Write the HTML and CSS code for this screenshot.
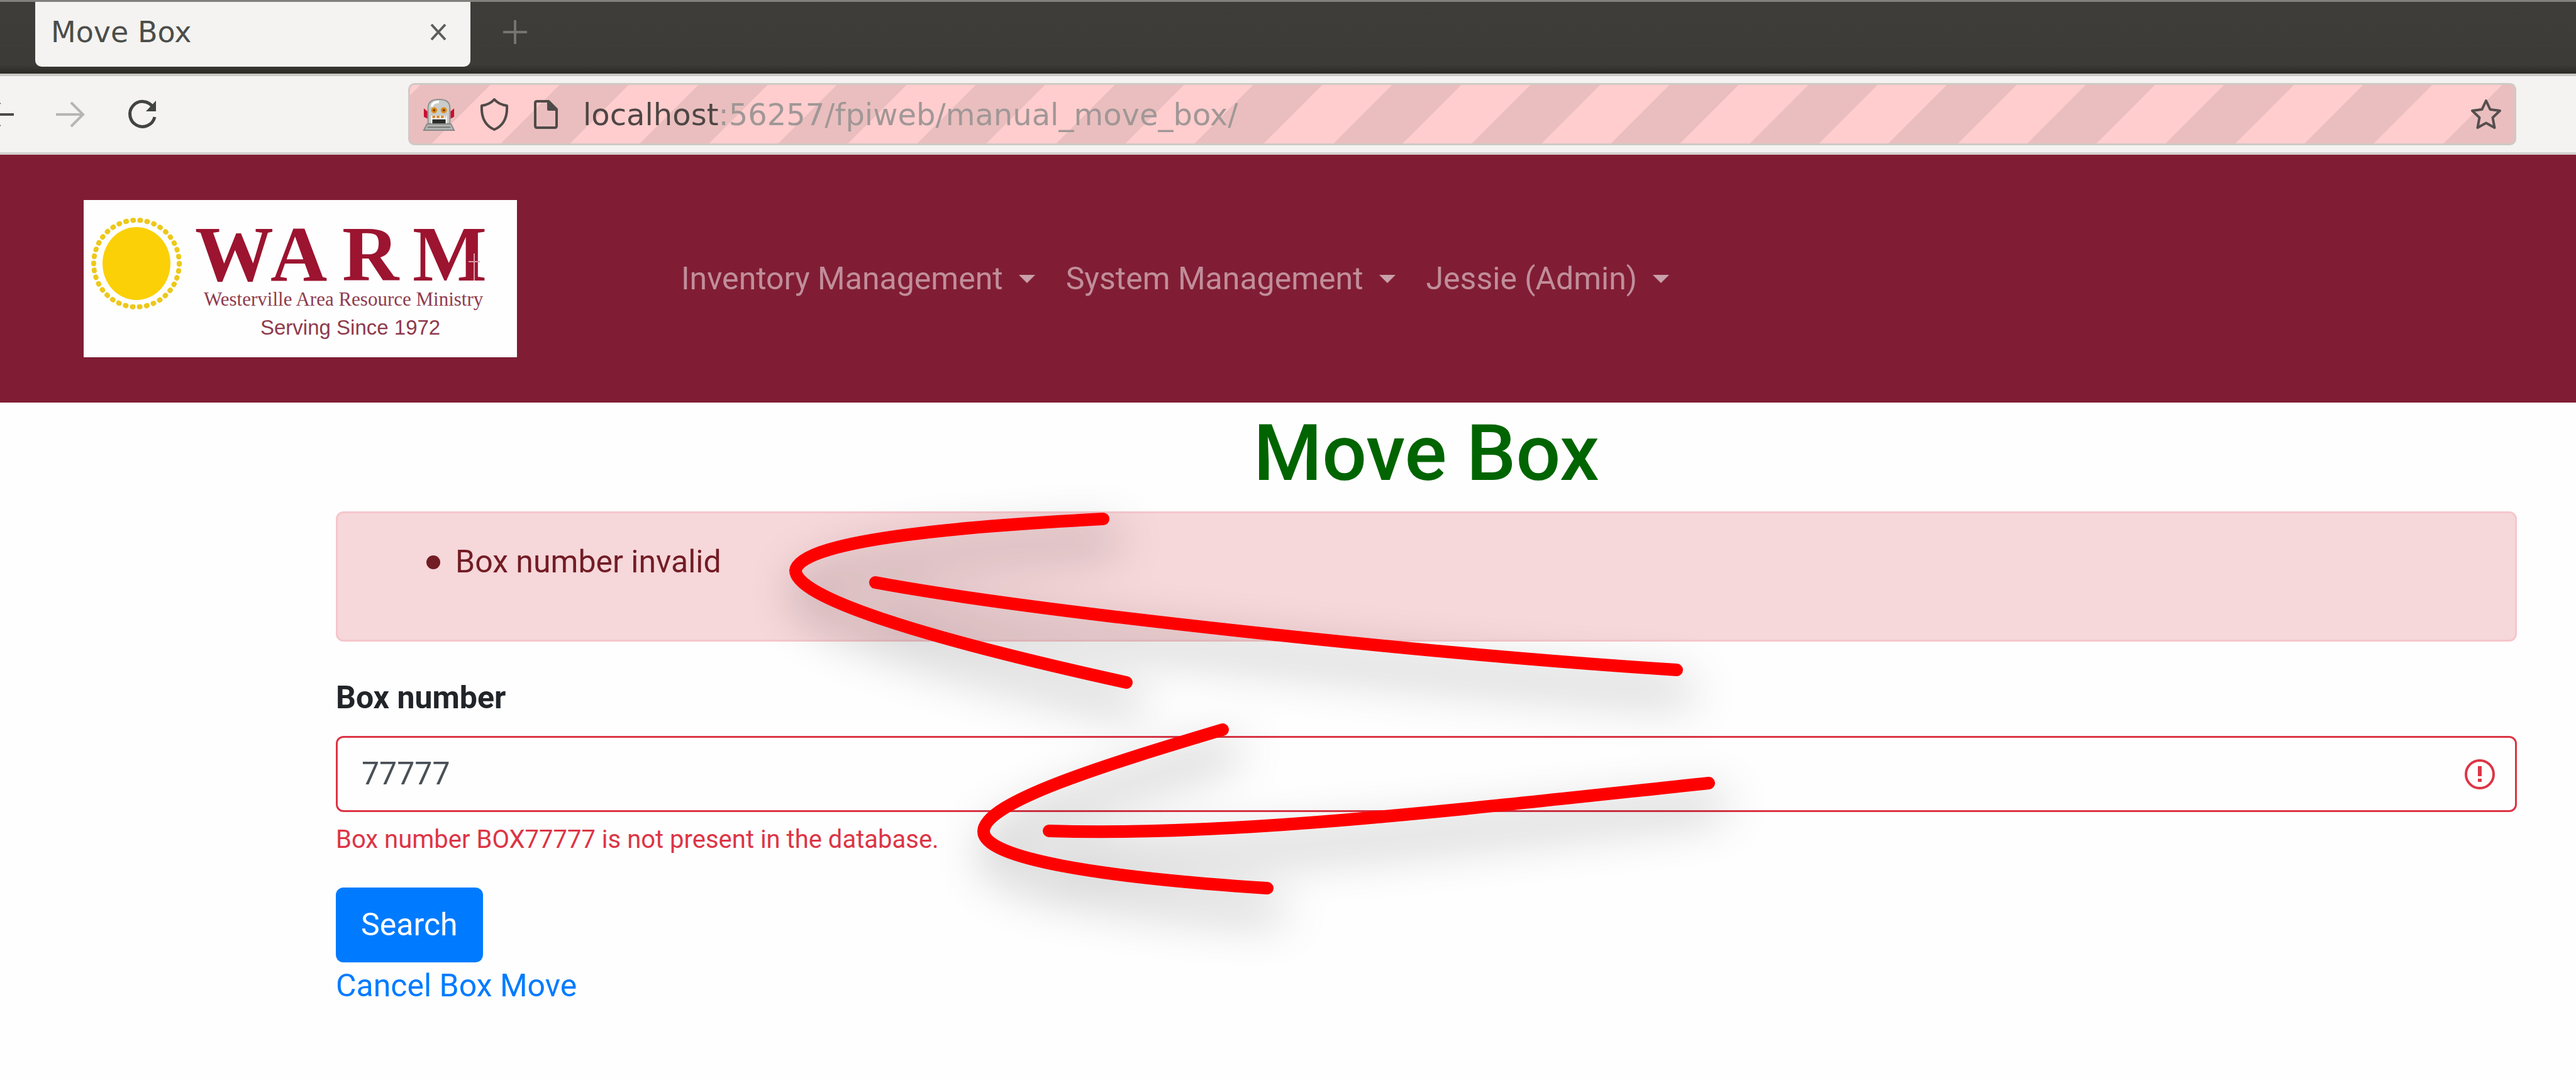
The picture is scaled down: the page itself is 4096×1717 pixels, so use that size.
FILE: index.html
```html
<!DOCTYPE html>
<html lang="en">
<head>
<meta charset="utf-8">
<meta name="viewport" content="width=device-width, initial-scale=1">
<title>Move Box</title>
<link rel="stylesheet" href="styles.css">
</head>
<body>
<div class="browser">
  <div class="tab-strip">
    <div class="tab">
      <span class="tab-title">Move Box</span>
      <button class="icon-button" type="button" aria-label="Close tab">
        <svg width="26" height="28" viewBox="0 0 26 28" fill="none" stroke="#5c5e5b" stroke-width="4"><path d="M2 2L24 26M24 2L2 26"/></svg>
      </button>
    </div>
    <button class="icon-button" type="button" aria-label="New tab">
      <svg width="38" height="38" viewBox="0 0 38 38" fill="none" stroke="#74756f" stroke-width="4"><path d="M19 0V38M0 19H38"/></svg>
    </button>
  </div>
  <div class="toolbar">
    <div class="history">
      <button class="icon-button" type="button" aria-label="Back">
        <svg width="22" height="50" viewBox="0 0 22 50" fill="none" stroke="#4a4c49" stroke-width="4"><path d="M22 25H-20M0 6L-20 25L0 44"/></svg>
      </button>
      <button class="icon-button" type="button" aria-label="Forward">
        <svg width="46" height="50" viewBox="0 0 46 50" fill="none" stroke="#b5b6b3" stroke-width="4"><path d="M0 25H43M24 6L43 25L24 44"/></svg>
      </button>
      <button class="icon-button" type="button" aria-label="Reload">
        <svg width="48" height="50" viewBox="0 0 48 50" fill="none" stroke="#424441" stroke-width="5"><path d="M41 13A20 20 0 1 0 44 29"/><path d="M46 3V20H30Z" fill="#424441" stroke="none"/></svg>
      </button>
    </div>
    <div class="url-bar">
      <svg class="robot" width="52" height="54" viewBox="0 0 54 54">
        <path d="M2 17L8 22V34L2 31ZM52 17L46 22V34L52 31Z" fill="#c8102e"/>
        <path d="M9 42V16Q9 2 27 2T45 16V42Z" fill="#c9ccca" stroke="#8f918f" stroke-width="2"/>
        <path d="M15 14Q17 6 27 6" fill="none" stroke="#fff" stroke-width="4"/>
        <ellipse cx="19" cy="20" rx="5" ry="5" fill="#e08a1a"/><ellipse cx="35" cy="20" rx="5" ry="5" fill="#e08a1a"/>
        <circle cx="19" cy="20" r="2" fill="#7a4300"/><circle cx="35" cy="20" r="2" fill="#7a4300"/>
        <path d="M14 29H40V42H14Z" fill="#fff"/><path d="M16 31H38" stroke="#d88a34" stroke-width="4" stroke-dasharray="5 2"/>
        <path d="M16 35H38V42H16Z" fill="#2b2b2b"/>
        <path d="M7 43H47L52 53H2Z" fill="#b4b6b4" stroke="#858785" stroke-width="2"/><path d="M8 48H46" stroke="#747674" stroke-width="2"/>
      </svg>
      <svg width="46" height="54" viewBox="0 0 46 54" fill="none" stroke="#4f4a49" stroke-width="4" stroke-linejoin="round"><path d="M23 3C28 9 36 12 43 13C44 32 37 45 23 51C9 45 2 32 3 13C10 12 18 9 23 3Z"/></svg>
      <svg width="40" height="48" viewBox="0 0 40 48" fill="none" stroke="#4f4a49" stroke-width="4" stroke-linejoin="round"><path d="M6 3H24L37 16V42Q37 45 34 45H6Q3 45 3 42V6Q3 3 6 3Z"/><path d="M24 3V16H37Z" fill="#4f4a49"/></svg>
      <input class="url" type="text" aria-label="Address" value="localhost:56257/fpiweb/manual_move_box/">
      <button class="icon-button" type="button" aria-label="Bookmark this page">
        <svg width="50" height="50" viewBox="0 0 50 50" fill="none" stroke="#554e4e" stroke-width="4" stroke-linejoin="round"><path d="M25 3L31.500 17L47 19L35.500 30L38.500 46L25 38.500L11.500 46L14.500 30L3 19L18.500 17Z"/></svg>
      </button>
    </div>
  </div>
</div>

<header class="navbar">
  <a class="brand" href="#">
    <svg class="brand-logo" width="689" height="250" viewBox="0 0 689 250" role="img" aria-label="WARM">
      <rect width="689" height="250" fill="#fefefe"/>
      <ellipse cx="84" cy="101" rx="54" ry="58" fill="#fbd007"/>
      <ellipse cx="84" cy="101" rx="68" ry="69" fill="none" stroke="#edc81b" stroke-width="8" stroke-linecap="round" stroke-dasharray="1 10.300"/>
      <g fill="#9c1430">
        <text class="logo-name" x="177 297 411 523" y="128">WARM</text>
        <path d="M621 85V128M612 98H630" stroke="#d99aa8" stroke-width="2"/>
      </g>
      <text class="logo-full" x="191" y="168">Westerville Area Resource Ministry</text>
      <text class="logo-since" x="281" y="214">Serving Since 1972</text>
    </svg>
  </a>
  <nav class="menu">
    <a class="menu-link" href="#">Inventory Management</a>
    <a class="menu-link" href="#">System Management</a>
    <a class="menu-link" href="#">Jessie (Admin)</a>
  </nav>
</header>

<main class="content">
  <h1 class="title">Move Box</h1>
  <div class="alert" role="alert">
    <ul class="alert-list">
      <li class="alert-item">Box number invalid</li>
    </ul>
  </div>
  <form class="form">
    <label class="label" for="box-number">Box number</label>
    <div class="field">
      <input class="field-input" id="box-number" type="text" value="77777" aria-invalid="true" aria-describedby="box-error">
      <svg width="50" height="50" viewBox="0 0 50 50" fill="none" stroke="#dc3545" stroke-width="4"><circle cx="25" cy="25" r="22"/><path d="M25 12V28" stroke-width="6"/><path d="M25 32V37" stroke-width="6"/></svg>
    </div>
    <p class="feedback" id="box-error">Box number BOX77777 is not present in the database.</p>
    <button class="submit" type="submit">Search</button>
  </form>
  <a class="cancel" href="#">Cancel Box Move</a>
</main>

<svg class="arrows" viewBox="0 0 4096 1717" aria-hidden="true">
  <path d="M1754 825C1560 835 1272 856 1265 907C1265 948 1450 1010 1791 1085"/>
  <path d="M1392 926C1640 972 2270 1040 2666 1065"/>
  <path d="M1944 1160C1760 1215 1564 1275 1564 1322C1564 1365 1750 1395 2015 1412"/>
  <path d="M1668 1321C1960 1330 2300 1289 2717 1245"/>
</svg>
</body>
</html>
```
FILE: styles.css
```css
* {
  box-sizing: border-box;
}

body {
  position: relative;
  margin: 0;
  background: #fefefe;
  color: #212529;
  font-family: Roboto, sans-serif;
  font-size: 50px;
  line-height: 75px;
}

svg {
  display: block;
  flex: none;
}

.icon-button {
  display: flex;
  padding: 0;
  border: 0;
  background: none;
}

/* Browser chrome */
.browser {
  font-family: "DejaVu Sans", sans-serif;
}

.tab-strip {
  display: flex;
  align-items: flex-start;
  gap: 52px;
  height: 117px;
  padding-left: 56px;
  border-top: 3px solid #80807d;
  background: linear-gradient(#3e3d3a, #3c3b37 88%, #2a2926);
}

.tab-strip > .icon-button {
  margin-top: 29px;
}

.tab {
  display: flex;
  align-items: center;
  justify-content: space-between;
  width: 692px;
  height: 103px;
  padding: 0 38px 8px 25px;
  border-radius: 0 0 10px 10px;
  background: #f4f3f1;
}

.tab-title {
  color: #4b4d4a;
  font-size: 46px;
  line-height: 60px;
}

.toolbar {
  display: flex;
  align-items: center;
  gap: 399px;
  height: 129px;
  padding: 0 95px 0 0;
  border-top: 4px solid #c9c8c5;
  border-bottom: 4px solid #d4d3cf;
  background: #f4f3f1;
}

.history {
  display: flex;
  gap: 67px;
}

.url-bar {
  display: flex;
  flex: 1;
  align-items: center;
  gap: 39px;
  height: 99px;
  padding: 0 20px;
  border: 3px solid #cfc9c5;
  border-radius: 10px;
  background: repeating-linear-gradient(-45deg, #ffcdcd -72px 6px, #eabebe 6px 84px) border-box;
}

.url {
  flex: 1;
  min-width: 0;
  height: 80px;
  padding: 0;
  border: 0;
  background: linear-gradient(90deg, #4d4645 216px, #a09797 216px) text;
  color: #8f8787;
  -webkit-text-fill-color: transparent;
  font: 48px/80px "DejaVu Sans", sans-serif;
}

/* Site header */
.navbar {
  display: flex;
  align-items: center;
  gap: 261px;
  height: 394px;
  padding: 0 133px;
  background: #801d34;
}

.logo-name {
  font: bold 125px "Liberation Serif", serif;
}

.logo-full {
  fill: #8f3a4c;
  font: 31px "Liberation Serif", serif;
}

.logo-since {
  fill: #8f3a4c;
  font: 33px "Liberation Sans", sans-serif;
}

.menu {
  display: flex;
  gap: 49px;
}

.menu-link {
  display: flex;
  align-items: center;
  gap: 25px;
  color: #c08e9a;
  text-decoration: none;
}

.menu-link::after {
  content: "";
  border: 13px solid transparent;
  border-top-color: #c9a0aa;
  border-bottom: 0;
}

/* Page */
.content {
  padding: 0 94px 110px 534px;
}

.title {
  margin: 0 0 17px;
  padding-top: 6px;
  color: #006400;
  font-size: 125px;
  font-weight: 500;
  line-height: 150px;
  text-align: center;
}

.alert {
  margin-bottom: 52px;
  padding: 40px 62px 36px;
  border: 3px solid #f5c6cb;
  border-radius: 12px;
  background: #f6d7da;
  color: #721c24;
}

.alert-list {
  margin: 0 0 50px;
  padding: 0 0 0 79px;
  list-style: none;
}

.alert-item {
  display: flex;
  align-items: center;
  gap: 24px;
}

.alert-item::before {
  content: "";
  width: 22px;
  height: 22px;
  border-radius: 50%;
  background: #721c24;
}

.label {
  display: block;
  margin-bottom: 23px;
  font-weight: 700;
}

.field {
  display: flex;
  align-items: center;
  height: 121px;
  padding: 0 31px 0 38px;
  border: 3px solid #dc3545;
  border-radius: 12px;
}

.field-input {
  flex: 1;
  min-width: 0;
  padding: 0;
  border: 0;
  background: none;
  color: #495057;
  font: 50px/75px Roboto, sans-serif;
}

.feedback {
  margin: 14px 0 46px;
  color: #dc3545;
  font-size: 40px;
  line-height: 60px;
}

.submit {
  display: block;
  height: 119px;
  padding: 0 40px;
  border: 0;
  border-radius: 12px;
  background: #007bff;
  color: #fff;
  font: 50px/75px Roboto, sans-serif;
}

.cancel {
  color: #007bff;
  text-decoration: none;
}

/* Hand-drawn callouts laid over the form */
.arrows {
  position: absolute;
  top: 0;
  left: 0;
  width: 100%;
  fill: none;
  stroke: #f00;
  stroke-width: 20px;
  stroke-linecap: round;
  filter: drop-shadow(14px 34px 38px rgba(0, 0, 0, 0.4));
  pointer-events: none;
}
```
